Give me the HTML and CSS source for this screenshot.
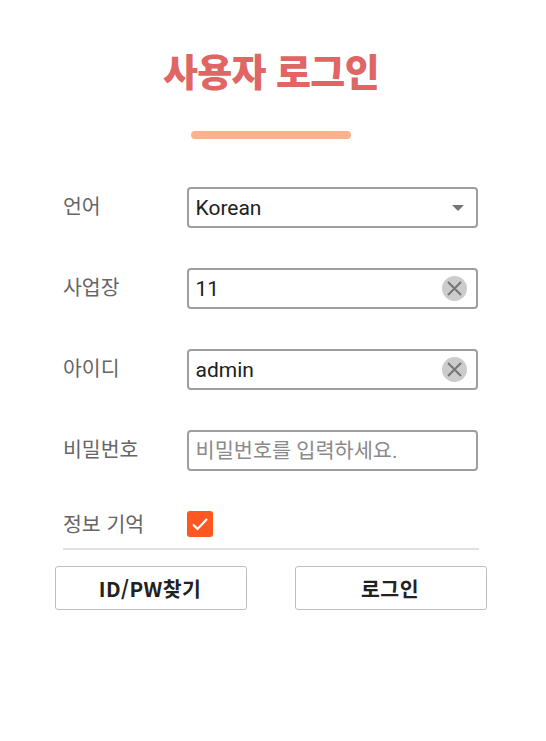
FILE: index.html
```html
<!DOCTYPE html>
<html lang="ko">
<head>
<meta charset="utf-8">
<title>사용자 로그인</title>
<link rel="stylesheet" href="styles.css">
</head>
<body>
<main class="login">
  <h1 class="title">사용자 로그인</h1>
  <div class="bar"></div>
  <form class="form">
    <div class="row">
      <span class="label">언어</span>
      <div class="field"><span class="value">Korean</span>
        <svg class="caret" width="12" height="6" viewBox="0 0 12 6"><path d="M0 0h12L6 6z" fill="#757575"/></svg>
      </div>
    </div>
    <div class="row">
      <span class="label">사업장</span>
      <div class="field"><span class="value">11</span>
        <svg class="clear" width="25" height="25" viewBox="0 0 25 25"><circle cx="12.5" cy="12.5" r="12.5" fill="#cccccc"/><path d="M6 6l13 13M19 6l-13 13" stroke="#757575" stroke-width="2" fill="none"/></svg>
      </div>
    </div>
    <div class="row">
      <span class="label">아이디</span>
      <div class="field"><span class="value">admin</span>
        <svg class="clear" width="25" height="25" viewBox="0 0 25 25"><circle cx="12.5" cy="12.5" r="12.5" fill="#cccccc"/><path d="M6 6l13 13M19 6l-13 13" stroke="#757575" stroke-width="2" fill="none"/></svg>
      </div>
    </div>
    <div class="row">
      <span class="label">비밀번호</span>
      <div class="field"><span class="value placeholder">비밀번호를 입력하세요.</span></div>
    </div>
    <div class="row remember">
      <span class="label">정보 기억</span>
      <span class="check"><svg width="26" height="26" viewBox="0 0 26 26"><path d="M6 13.5l4.5 4.5 9.5-10" stroke="#fff" stroke-width="2.2" fill="none"/></svg></span>
    </div>
  </form>
  <div class="actions">
    <button type="button" class="btn">ID/PW찾기</button>
    <button type="button" class="btn">로그인</button>
  </div>
</main>
</body>
</html>
```
FILE: styles.css
```css
html, body { margin: 0; padding: 0; background: #fff; }
body { font-family: Roboto, "Noto Sans CJK KR", sans-serif; width: 546px; height: 741px; overflow: hidden; }
.login { display: flex; flex-direction: column; padding: 0 59px 0 55px; }
.title { margin: 43px 0 0; height: 54px; line-height: 54px; text-align: center; font-size: 38px; font-weight: 900; color: #e06565; letter-spacing: -0.6px; font-family: "Noto Sans CJK KR", sans-serif; }
.bar { width: 160px; height: 8px; border-radius: 4px; background: #ffb28a; margin: 34px 0 0 136px; }
.form { display: flex; flex-direction: column; margin: 48px 0 0 8px; width: 416px; }
.row { display: flex; align-items: center; height: 41px; margin-bottom: 40px; }
.label { width: 124px; font-size: 20.5px; color: #666; font-family: "Noto Sans CJK KR", sans-serif; position: relative; top: -3px; line-height: 28px; }
.field { box-sizing: border-box; width: 291px; height: 41px; border: 2px solid #9e9e9e; border-radius: 4px; display: flex; align-items: center; justify-content: space-between; padding: 2px 9px 0 7px; }
.value { font-size: 21px; color: #212121; line-height: 1; margin-left: -0.5px; }
.placeholder { color: #8a8a8a; font-size: 20.8px; }
.caret { margin-right: 3px; margin-top: -2px; }
.clear { margin-top: -2px; }
.remember { height: 26px; margin-bottom: 0; padding-bottom: 11px; border-bottom: 2px solid #e0e0e0; }
.remember .label { top: -1px; }
.check { width: 26px; height: 26px; border-radius: 3px; background: #ff5722; display: block; }
.check svg { display: block; }
.actions { display: flex; justify-content: space-between; margin-top: 16px; width: 432px; }
.btn { box-sizing: border-box; width: 192px; height: 44px; background: #fff; border: 1px solid #bdbdbd; border-radius: 3px; font-size: 20.5px; font-weight: 700; color: #212121; font-family: "Noto Sans CJK KR", sans-serif; padding: 0 2px 0 0; letter-spacing: 0.4px; }
```
